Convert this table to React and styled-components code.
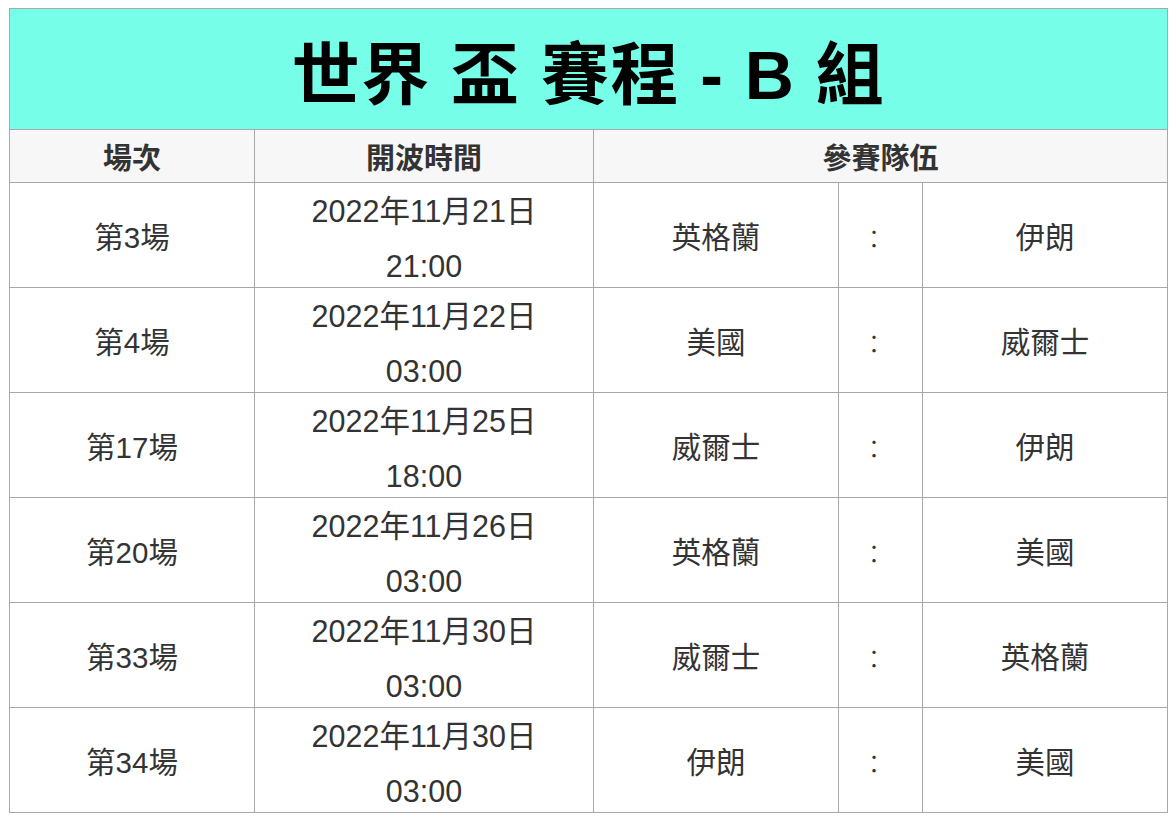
import styled, { createGlobalStyle } from "styled-components";

const GlobalStyle = createGlobalStyle`
    body {
        margin: 8px 0 0 9px;
        background: #ffffff;
        font-family: "Liberation Sans", "Noto Sans CJK TC", sans-serif;
    }
`;

const matches = [
    { no: 3, date: "2022年11月21日", time: "21:00", home: "英格蘭", away: "伊朗" },
    { no: 4, date: "2022年11月22日", time: "03:00", home: "美國", away: "威爾士" },
    { no: 17, date: "2022年11月25日", time: "18:00", home: "威爾士", away: "伊朗" },
    { no: 20, date: "2022年11月26日", time: "03:00", home: "英格蘭", away: "美國" },
    { no: 33, date: "2022年11月30日", time: "03:00", home: "威爾士", away: "英格蘭" },
    { no: 34, date: "2022年11月30日", time: "03:00", home: "伊朗", away: "美國" },
];

export default function App() {
    return (
        <>
            <GlobalStyle />
            <Table>
                <colgroup>
                    <col style={{ width: 245 }} />
                    <col style={{ width: 339 }} />
                    <col style={{ width: 245 }} />
                    <col style={{ width: 84 }} />
                    <col style={{ width: 245 }} />
                </colgroup>
                <thead>
                    <tr>
                        <Title colSpan={5}>世界 盃 賽程 - B 組</Title>
                    </tr>
                    <tr>
                        <Head>場次</Head>
                        <Head>開波時間</Head>
                        <Head colSpan={3}>參賽隊伍</Head>
                    </tr>
                </thead>
                <tbody>
                    {matches.map((m) => (
                        <tr key={m.no}>
                            <Cell>第{m.no}場</Cell>
                            <Cell>
                                <DateBox>
                                    <div>{m.date}</div>
                                    <div>{m.time}</div>
                                </DateBox>
                            </Cell>
                            <Cell>{m.home}</Cell>
                            <Colon>：</Colon>
                            <Cell>{m.away}</Cell>
                        </tr>
                    ))}
                </tbody>
            </Table>
        </>
    );
}

const Table = styled.table`
    width: 1159px;
    border-collapse: collapse;
    table-layout: fixed;
    color: #333333;
    font-size: 29.5px;

    th,
    td {
        border: 1px solid #a8a8a8;
        padding: 0;
        text-align: center;
    }
`;

const Title = styled.th`
    height: 120px;
    background-color: #76fee9;
    color: #000000;
    font-size: 68px;
    font-weight: 700;
    letter-spacing: 1.5px;
`;

const Head = styled.th`
    height: 52px;
    background-color: #f7f7f7;
    font-size: 29px;
    font-weight: 700;
`;

const Cell = styled.td`
    height: 104px;
`;

const Colon = styled.td`
    height: 104px;
    padding-right: 1px;
    font-family: "Noto Sans CJK SC", sans-serif;
    font-size: 26px;
    font-weight: 300;
`;

const DateBox = styled.div`
    box-sizing: border-box;
    height: 104px;
    padding-top: 8px;
    display: flex;
    flex-direction: column;
    justify-content: center;
    font-size: 30.5px;
    line-height: 55px;
`;
